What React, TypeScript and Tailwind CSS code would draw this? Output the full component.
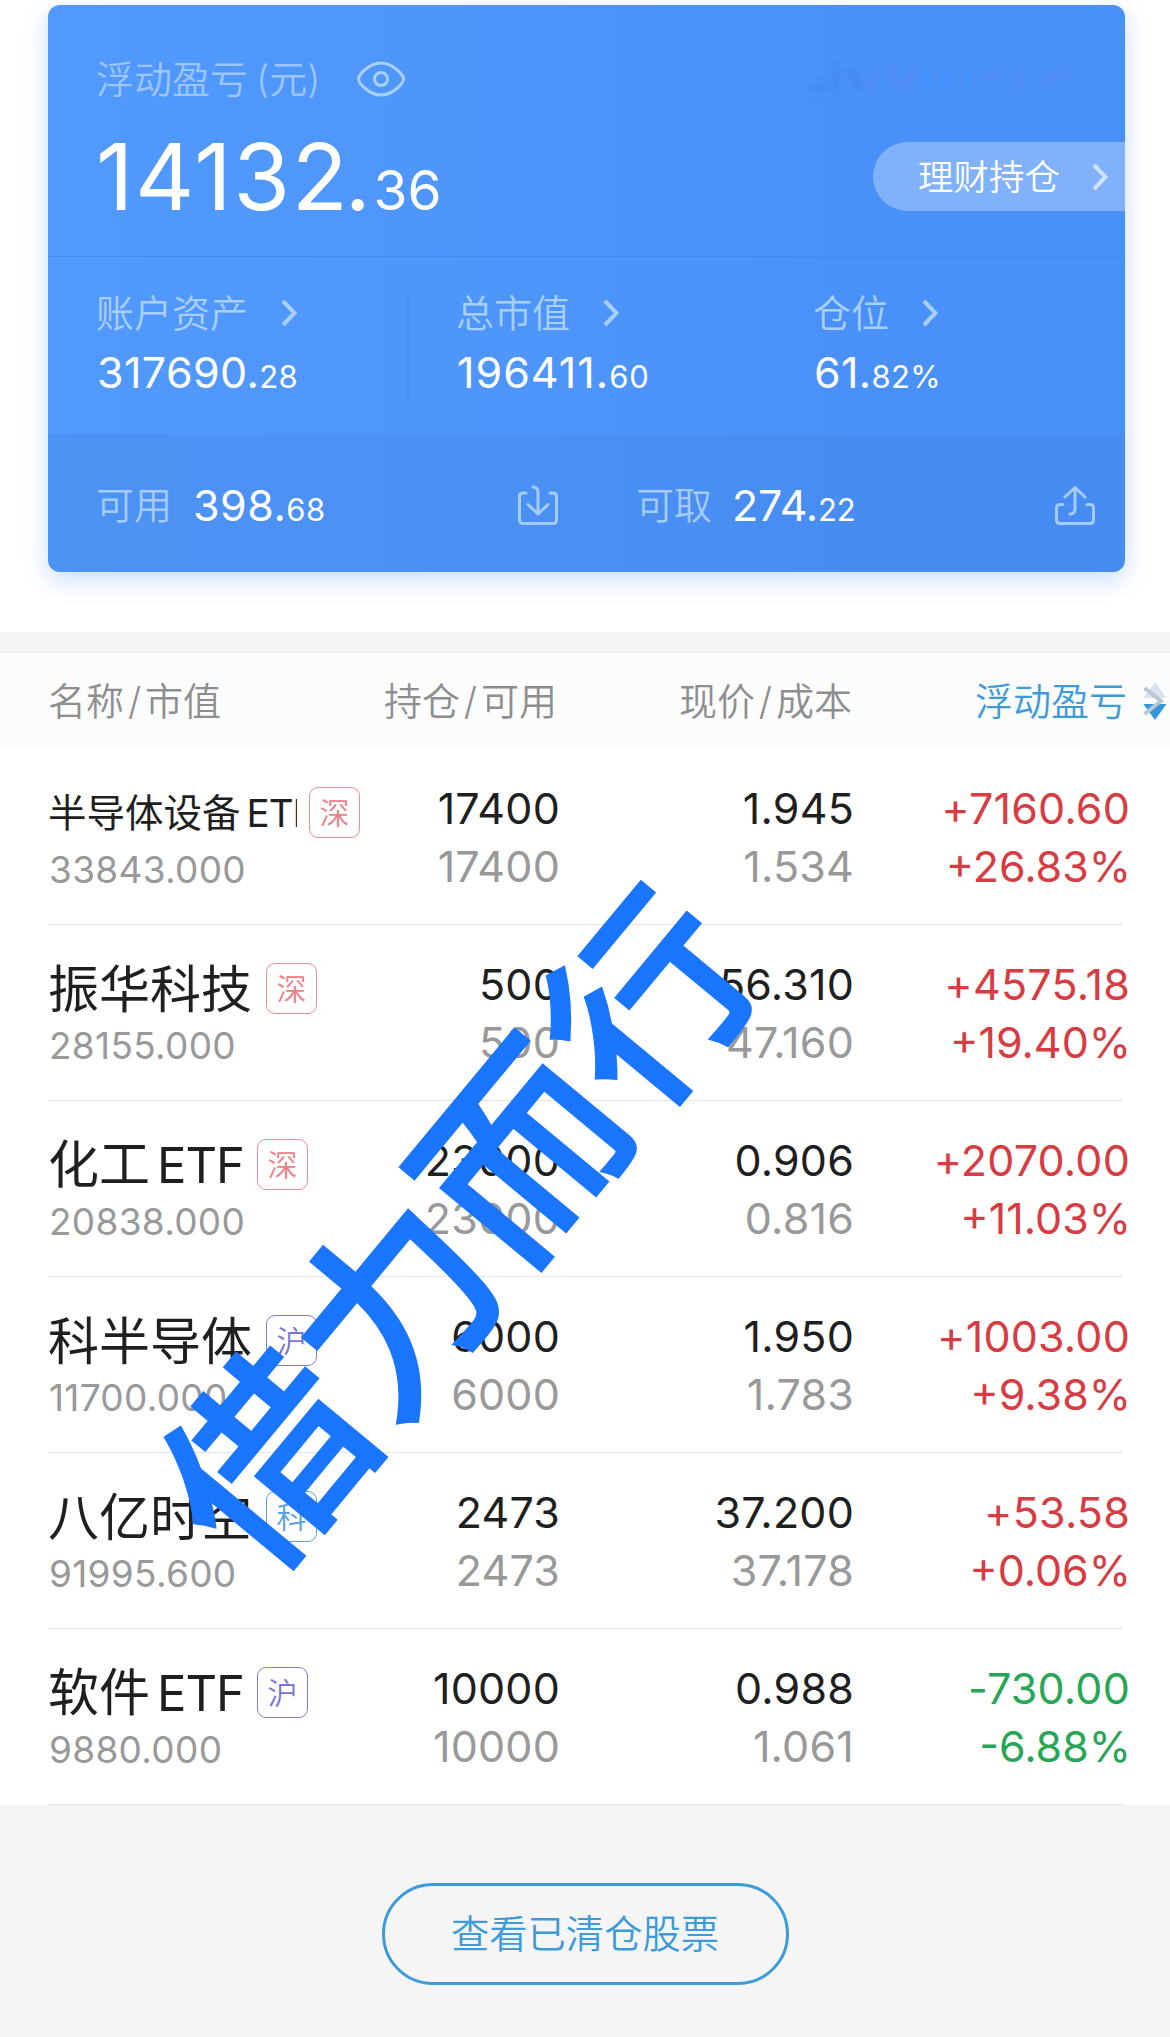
import { clsx } from "clsx";

type Holding = {
  name: string;
  latin?: string;
  small?: boolean;
  market: "深" | "沪" | "科";
  value: string;
  qty: string;
  available: string;
  price: string;
  cost: string;
  pnl: string;
  pnlPct: string;
};

const holdings: Holding[] = [
  { name: "半导体设备", latin: "ETF", small: true, market: "深", value: "33843.000", qty: "17400", available: "17400", price: "1.945", cost: "1.534", pnl: "+7160.60", pnlPct: "+26.83%" },
  { name: "振华科技", market: "深", value: "28155.000", qty: "500", available: "500", price: "56.310", cost: "47.160", pnl: "+4575.18", pnlPct: "+19.40%" },
  { name: "化工", latin: "ETF", market: "深", value: "20838.000", qty: "23000", available: "23000", price: "0.906", cost: "0.816", pnl: "+2070.00", pnlPct: "+11.03%" },
  { name: "科半导体", market: "沪", value: "11700.000", qty: "6000", available: "6000", price: "1.950", cost: "1.783", pnl: "+1003.00", pnlPct: "+9.38%" },
  { name: "八亿时空", market: "科", value: "91995.600", qty: "2473", available: "2473", price: "37.200", cost: "37.178", pnl: "+53.58", pnlPct: "+0.06%" },
  { name: "软件", latin: "ETF", market: "沪", value: "9880.000", qty: "10000", available: "10000", price: "0.988", cost: "1.061", pnl: "-730.00", pnlPct: "-6.88%" },
];

const marketColors = {
  深: "border-[#ec8d95] text-[#ec8087]",
  沪: "border-[#8380d0] text-[#7a76d2]",
  科: "border-[#5d9fe0] text-[#5d9fe0]",
};

function Chevron({ className }: { className?: string }) {
  return (
    <svg className={clsx("h-7 w-4 shrink-0", className)} viewBox="0 0 16 28" fill="none" stroke="currentColor" strokeWidth="4">
      <path d="M2 2 L13.500 14 L2 26" />
    </svg>
  );
}

function Amount({ int, dec, className = "tracking-[0.5px]" }: { int: string; dec: string; className?: string }) {
  return (
    <span className={clsx("whitespace-nowrap pl-px text-[43px] text-white", className)}>
      {int}.<span className="text-[31px]">{dec}</span>
    </span>
  );
}

function Stat({ label, int, dec, className }: { label: string; int: string; dec: string; className?: string }) {
  return (
    <div className="flex flex-col gap-[19px]">
      <div className="flex items-center text-[38px] font-[350] text-[#a9cffd]">
        {label}
        <Chevron className="ml-[33px]" />
      </div>
      <Amount int={int} dec={dec} className={className} />
    </div>
  );
}

function SummaryCard() {
  return (
    <section className="ml-12 mt-[5px] flex h-[567px] w-[1077px] flex-col overflow-hidden rounded-xl bg-linear-to-r from-[#5199fc] via-[#4d95fa] via-50% to-[#4990f8] to-75% shadow-[0_8px_24px_rgba(74,144,248,0.3)]">
      <div className="flex h-[251px] justify-between">
        <div className="pl-12 pt-[55px]">
          <div className="flex items-center text-[38px] font-[350] text-[#9cc6fd]">
            <span>
              浮动盈亏<span className="ml-2">(</span>元<span>)</span>
            </span>
            <svg className="ml-9 h-9 w-12" viewBox="0 0 48 36" fill="none" stroke="#a9cffd" strokeWidth="3">
              <path d="M1.500 18 C1.500 14 12 2 24 2 C36 2 46.500 14 46.500 18 C46.500 22 36 34 24 34 C12 34 1.500 22 1.500 18 Z" />
              <circle cx="24" cy="18" r="6.500" />
            </svg>
          </div>
          <div className="mt-[33px] text-[92px] tracking-[1.600px] text-white">
            14132<span className="-ml-[5px]">.</span><span className="ml-px text-[55px] tracking-normal">36</span>
          </div>
        </div>
        <div className="flex flex-col items-end">
          <svg className="mr-10 mt-14 h-9 w-[276px] blur-[2.500px]" viewBox="0 0 276 36" fill="none" strokeWidth="8">
            <path d="M4 28 L16 25 M28 6 L24 30 M40 8 L52 28" stroke="#4285ee" strokeOpacity="0.5" />
            <path d="M66 8 L60 30 M82 6 L90 28 M104 10 L98 28" stroke="#5a8bf4" strokeOpacity="0.6" />
            <path d="M116 8 L120 30 M138 10 L132 28 M156 6 L160 24" stroke="#3f92ff" strokeOpacity="0.7" />
            <path d="M176 20 L196 8 M206 28 L214 8 M232 24 L262 12" stroke="#568df5" strokeOpacity="0.7" />
          </svg>
          <div className="mt-[45px] flex h-[69px] w-[252px] items-center rounded-l-full bg-white/30 pl-[45px] pt-0.5 text-[35.500px] font-[350] text-white">
            理财持仓
            <Chevron className="-mt-0.5 ml-8 text-[#cfe2fd]" />
          </div>
        </div>
      </div>

      <div className="flex h-[178px] border-t border-[#4489ee] pt-[37px]">
        <div className="w-[359px] pl-12">
          <Stat label="账户资产" int="317690" dec="28" className="tracking-[0.400px]" />
        </div>
        <div className="h-[106px] w-[360px] border-l-2 border-dotted border-[#4389ee] pl-[47px]">
          <Stat label="总市值" int="196411" dec="60" className="tracking-[1px]" />
        </div>
        <div className="h-[106px] border-l-2 border-dotted border-[#4389ee] pl-[44px]">
          <Stat label="仓位" int="61" dec="82%" className="tracking-[0.300px]" />
        </div>
      </div>

      <div className="flex flex-1 items-center bg-[#3f7fd8]/20 pl-12 pr-[30px] pt-1 text-[38px] font-[350] text-[#a3cbfc]">
        <div className="flex w-[540px] items-center">
          <span className="mr-5">可用</span>
          <span className="font-normal"><Amount int="398" dec="68" /></span>
          <svg className="ml-auto mr-[78px] h-10 w-10" viewBox="0 0 40 40" fill="none" stroke="currentColor" strokeWidth="3" strokeLinecap="round" strokeLinejoin="round">
            <path d="M8 8 H5 Q1.500 8 1.500 11.500 V35 Q1.500 38.500 5 38.500 H35 Q38.500 38.500 38.500 35 V11.500 Q38.500 8 35 8 H32" />
            <path d="M15 2 Q20 2 20 8 V29 M10 19.500 L20 29 L30 19.500" />
          </svg>
        </div>
        <span className="mr-[19px]">可取</span>
        <span className="font-normal"><Amount int="274" dec="22" className="tracking-[-0.200px]" /></span>
        <svg className="ml-auto h-10 w-10" viewBox="0 0 40 40" fill="none" stroke="currentColor" strokeWidth="3" strokeLinecap="round" strokeLinejoin="round">
          <path d="M8 19.500 H5 Q1.500 19.500 1.500 23 V35 Q1.500 38.500 5 38.500 H35 Q38.500 38.500 38.500 35 V23 Q38.500 19.500 35 19.500 H32" />
          <path d="M15 29 Q20 29 20 24 V2.500 M10 12 L20 2.500 L30 12" />
        </svg>
      </div>
    </section>
  );
}

function Slash() {
  return <span className="inline-block w-[21px] text-center">/</span>;
}

function TableHeader() {
  return (
    <div className="flex h-24 items-center bg-[#fcfcfc] pl-12 text-[38px] font-[350] text-[#8e8e8e]">
      <div className="w-[210px] shrink-0">名称<Slash />市值</div>
      <div className="w-[299px] shrink-0 text-right">持仓<Slash />可用</div>
      <div className="w-[295px] shrink-0 text-right">现价<Slash />成本</div>
      <div className="w-[275px] shrink-0 text-right text-[#3d9bd9]">浮动盈亏</div>
      <svg className="ml-4 h-10 w-6 shrink-0" viewBox="0 0 24 40">
        <path d="M12 1 L23.500 17 H0.500 Z" fill="#d9e3ec" />
        <path d="M0.500 23 H23.500 L12 39 Z" fill="#3495dc" />
        <path d="M1.500 7 L18 20 L1.500 33" fill="none" stroke="#b9c6d3" strokeWidth="4" />
      </svg>
    </div>
  );
}

function HoldingRow({ item }: { item: Holding }) {
  const up = item.pnl.startsWith("+");
  return (
    <div className="ml-12 flex h-[176px] w-[1075px] border-b border-[#e4e4e4] pt-[38px] text-[43px] text-[#1f1f1f]">
      <div className="flex w-[312px] shrink-0 flex-col gap-[13px]">
        <div className="flex h-[51px] items-center">
          <div className={clsx("whitespace-nowrap pt-px leading-[51px]", item.small ? "w-[249px] overflow-hidden text-[38.500px]" : "text-[51px]")}>
            {item.name}
            {item.latin && <span className={item.small ? "ml-1.5 tracking-[-1px]" : "ml-[7px] text-[49px] tracking-[-1px]"}>{item.latin}</span>}
          </div>
          <div className={clsx("flex size-[51px] shrink-0 items-center justify-center rounded-[9px] border-[1.500px] text-[30px] font-[350]", item.small ? "ml-3" : item.latin ? "ml-[13px]" : "ml-[14px]", marketColors[item.market])}>
            {item.market}
          </div>
        </div>
        <div className="pl-px text-[37px] tracking-[0.300px] text-[#999999]">{item.value}</div>
      </div>
      <div className="flex w-[200px] shrink-0 flex-col gap-[15px] text-right tracking-[0.200px]">
        <div>{item.qty}</div>
        <div className="text-[#999999]">{item.available}</div>
      </div>
      <div className="flex w-[294px] shrink-0 flex-col gap-[15px] text-right tracking-[0.200px]">
        <div>{item.price}</div>
        <div className="text-[#999999]">{item.cost}</div>
      </div>
      <div className={clsx("flex w-[276px] shrink-0 flex-col gap-[15px] text-right", up ? "text-[#d63c42]" : "text-[#27a655]")}>
        <div className="tracking-[0.200px]">{item.pnl}</div>
        <div className="-mr-px">{item.pnlPct}</div>
      </div>
    </div>
  );
}

export default function App() {
  return (
    <main className="relative flex h-[2037px] w-[1170px] flex-col overflow-hidden bg-white font-['Inter','Noto_Sans_CJK_SC',sans-serif] leading-none">
      <SummaryCard />
      <div className="mt-[60px] h-[21px] bg-[#f4f4f4]" />
      <TableHeader />
      <div>
        {holdings.map((item) => (
          <HoldingRow key={item.name} item={item} />
        ))}
      </div>
      <div className="flex flex-1 items-start justify-center bg-[#f5f5f6] pt-[78px]">
        <button className="h-[102px] w-[407px] rounded-full border-[3px] border-[#3d9bd9] pt-px text-[38.300px] font-[350] text-[#3d9bd9]">
          查看已清仓股票
        </button>
      </div>

      {/* watermark over the table */}
      <div className="pointer-events-none absolute left-[460px] top-[1230px] -translate-x-1/2 -translate-y-1/2 -rotate-[50.3deg] whitespace-nowrap text-[199px] font-medium text-[#1a75ff] [-webkit-text-stroke:2px_#1a75ff]">
        借力而行
      </div>
    </main>
  );
}
